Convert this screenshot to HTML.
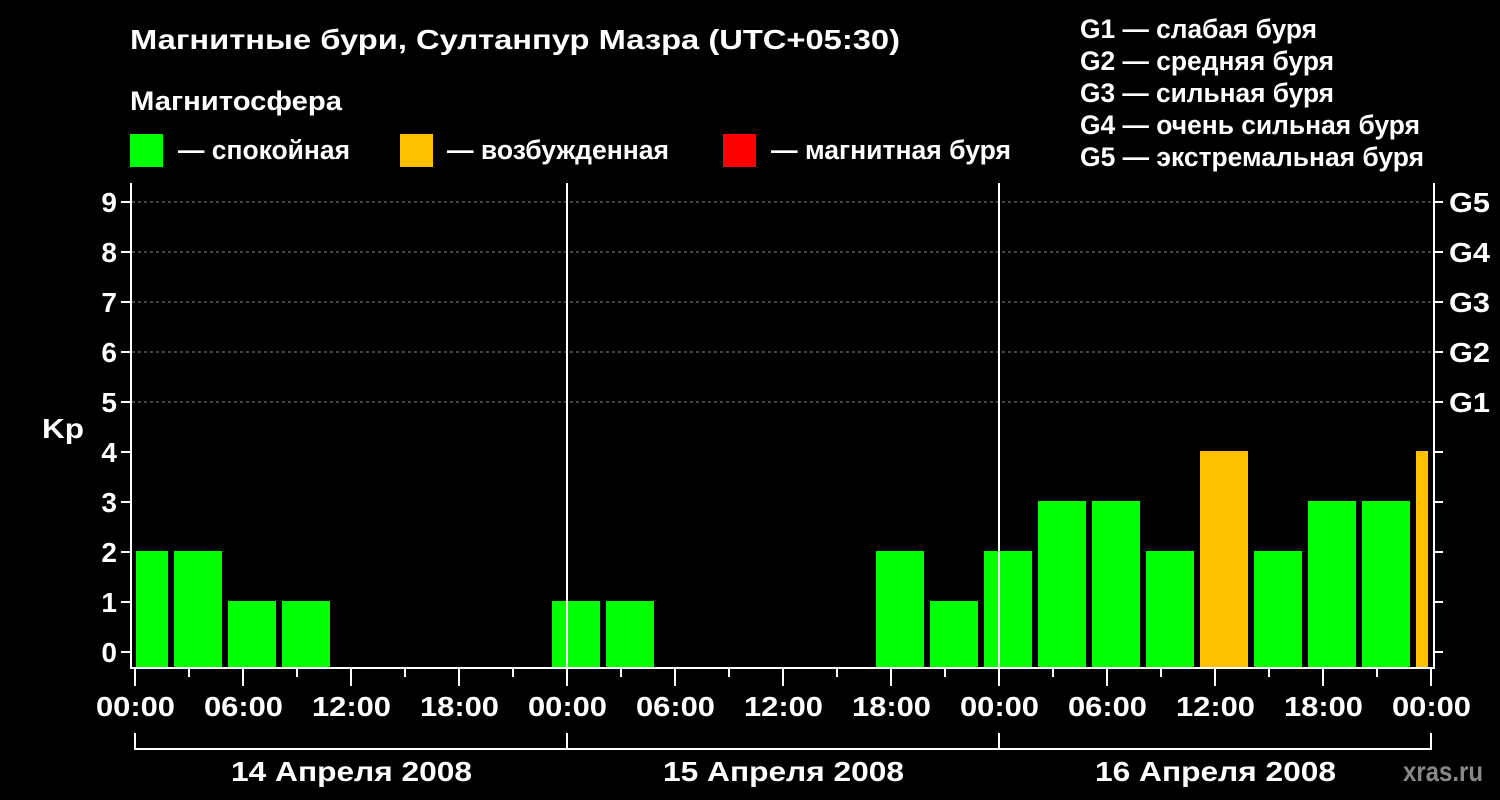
<!DOCTYPE html>
<html><head><meta charset="utf-8"><style>
html,body{margin:0;padding:0;background:#000;width:1500px;height:800px;overflow:hidden}
svg{display:block}
text{font-family:"Liberation Sans",sans-serif;font-weight:bold;fill:#fff}
</style></head><body>
<svg width="1500" height="800" viewBox="0 0 1500 800">
<rect width="1500" height="800" fill="#000"/>
<text x="130" y="49" font-size="28" textLength="770" lengthAdjust="spacingAndGlyphs">Магнитные бури, Султанпур Мазра (UTC+05:30)</text>
<text x="130" y="110" font-size="27" textLength="212" lengthAdjust="spacingAndGlyphs">Магнитосфера</text>
<rect x="130" y="134" width="33" height="33" fill="#00ff00"/>
<text x="178" y="159" font-size="27" textLength="172" lengthAdjust="spacingAndGlyphs">— спокойная</text>
<rect x="400" y="134" width="33" height="33" fill="#ffc000"/>
<text x="447" y="159" font-size="27" textLength="222" lengthAdjust="spacingAndGlyphs">— возбужденная</text>
<rect x="723" y="134" width="33" height="33" fill="#ff0000"/>
<text x="771" y="159" font-size="27" textLength="240" lengthAdjust="spacingAndGlyphs">— магнитная буря</text>
<g font-size="27" lengthAdjust="spacingAndGlyphs">
<text x="1080" y="38" textLength="237" lengthAdjust="spacingAndGlyphs">G1 — слабая буря</text>
<text x="1080" y="70" textLength="254" lengthAdjust="spacingAndGlyphs">G2 — средняя буря</text>
<text x="1080" y="102" textLength="254" lengthAdjust="spacingAndGlyphs">G3 — сильная буря</text>
<text x="1080" y="134" textLength="340" lengthAdjust="spacingAndGlyphs">G4 — очень сильная буря</text>
<text x="1080" y="166" textLength="344" lengthAdjust="spacingAndGlyphs">G5 — экстремальная буря</text>
</g>
<g stroke="#888" stroke-dasharray="3,3" stroke-width="1">
<line x1="132" y1="202" x2="1433" y2="202"/><line x1="132" y1="252" x2="1433" y2="252"/>
<line x1="132" y1="302" x2="1433" y2="302"/><line x1="132" y1="352" x2="1433" y2="352"/>
<line x1="132" y1="402" x2="1433" y2="402"/>
</g>
<g fill="#00ff00">
<rect x="136" y="551" width="32" height="117"/>
<rect x="174" y="551" width="48" height="117"/>
<rect x="228" y="601" width="48" height="67"/>
<rect x="282" y="601" width="48" height="67"/>
<rect x="552" y="601" width="48" height="67"/>
<rect x="606" y="601" width="48" height="67"/>
<rect x="876" y="551" width="48" height="117"/>
<rect x="930" y="601" width="48" height="67"/>
<rect x="984" y="551" width="48" height="117"/>
<rect x="1038" y="501" width="48" height="167"/>
<rect x="1092" y="501" width="48" height="167"/>
<rect x="1146" y="551" width="48" height="117"/>
<rect x="1254" y="551" width="48" height="117"/>
<rect x="1308" y="501" width="48" height="167"/>
<rect x="1362" y="501" width="48" height="167"/>
</g>
<g fill="#ffc000">
<rect x="1200" y="451" width="48" height="217"/>
<rect x="1416" y="451" width="12" height="217"/>
</g>
<g stroke="#fff" stroke-width="2" fill="none">
<line x1="131" y1="183" x2="131" y2="669"/>
<line x1="1434" y1="183" x2="1434" y2="669"/>
<line x1="130" y1="668" x2="1435" y2="668"/>
<line x1="567" y1="183" x2="567" y2="668"/>
<line x1="999" y1="183" x2="999" y2="668"/>
<path d="M121 202H131M121 252H131M121 302H131M121 352H131M121 402H131M121 452H131M121 502H131M121 552H131M121 602H131M121 652H131"/>
<path d="M1434 202H1443M1434 252H1443M1434 302H1443M1434 352H1443M1434 402H1443M1434 452H1443M1434 502H1443M1434 552H1443M1434 602H1443M1434 652H1443"/>
<path d="M135 669V686M189 669V677M243 669V686M297 669V677M351 669V686M405 669V677M459 669V686M513 669V677M567 669V686M621 669V677M675 669V686M729 669V677M783 669V686M837 669V677M891 669V686M945 669V677M999 669V686M1053 669V677M1107 669V686M1161 669V677M1215 669V686M1269 669V677M1323 669V686M1377 669V677M1431 669V686"/>
<path d="M135 733V749H1431V733M567 733V749M999 733V749"/>
</g>
<g font-size="28" text-anchor="end">
<text x="117" y="212">9</text><text x="117" y="262">8</text><text x="117" y="312">7</text>
<text x="117" y="362">6</text><text x="117" y="412">5</text><text x="117" y="462">4</text>
<text x="117" y="512">3</text><text x="117" y="562">2</text><text x="117" y="612">1</text>
<text x="117" y="662">0</text>
</g>
<text x="42" y="438" font-size="28" textLength="42" lengthAdjust="spacingAndGlyphs">Kp</text>
<g font-size="28">
<text x="1449" y="212" textLength="41" lengthAdjust="spacingAndGlyphs">G5</text><text x="1449" y="262" textLength="41" lengthAdjust="spacingAndGlyphs">G4</text><text x="1449" y="312" textLength="41" lengthAdjust="spacingAndGlyphs">G3</text>
<text x="1449" y="362" textLength="41" lengthAdjust="spacingAndGlyphs">G2</text><text x="1449" y="412" textLength="41" lengthAdjust="spacingAndGlyphs">G1</text>
</g>
<g font-size="28">
<text x="96" y="716" textLength="79" lengthAdjust="spacingAndGlyphs">00:00</text><text x="204" y="716" textLength="79" lengthAdjust="spacingAndGlyphs">06:00</text><text x="312" y="716" textLength="79" lengthAdjust="spacingAndGlyphs">12:00</text><text x="420" y="716" textLength="79" lengthAdjust="spacingAndGlyphs">18:00</text>
<text x="528" y="716" textLength="79" lengthAdjust="spacingAndGlyphs">00:00</text><text x="636" y="716" textLength="79" lengthAdjust="spacingAndGlyphs">06:00</text><text x="744" y="716" textLength="79" lengthAdjust="spacingAndGlyphs">12:00</text><text x="852" y="716" textLength="79" lengthAdjust="spacingAndGlyphs">18:00</text>
<text x="960" y="716" textLength="79" lengthAdjust="spacingAndGlyphs">00:00</text><text x="1068" y="716" textLength="79" lengthAdjust="spacingAndGlyphs">06:00</text><text x="1176" y="716" textLength="79" lengthAdjust="spacingAndGlyphs">12:00</text><text x="1284" y="716" textLength="79" lengthAdjust="spacingAndGlyphs">18:00</text>
<text x="1392" y="716" textLength="79" lengthAdjust="spacingAndGlyphs">00:00</text>
<text x="231" y="781" textLength="241" lengthAdjust="spacingAndGlyphs">14 Апреля 2008</text>
<text x="663" y="781" textLength="241" lengthAdjust="spacingAndGlyphs">15 Апреля 2008</text>
<text x="1095" y="781" textLength="241" lengthAdjust="spacingAndGlyphs">16 Апреля 2008</text>
</g>
<text x="1403" y="781" font-size="28" textLength="80" lengthAdjust="spacingAndGlyphs" style="fill:#888">xras.ru</text>
</svg>
</body></html>
